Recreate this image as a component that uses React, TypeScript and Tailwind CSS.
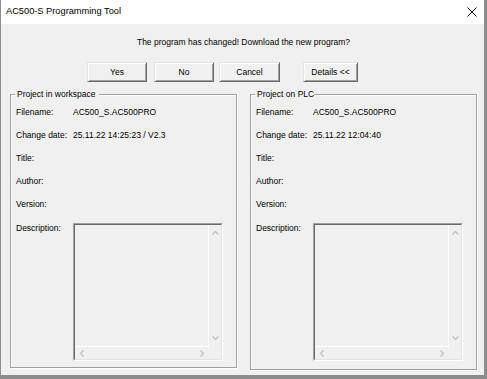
import React from "react";

const font = "font-['Liberation_Sans',Arial,sans-serif]";

const Chevron = ({ dir }: { dir: "up" | "down" | "left" | "right" }) => {
  const d = {
    up: "M0.5 4.5 L3.5 1.5 L6.5 4.5",
    down: "M0.5 1.5 L3.5 4.5 L6.5 1.5",
    left: "M4.5 0.5 L1.5 3.5 L4.5 6.5",
    right: "M1.5 0.5 L4.5 3.5 L1.5 6.5",
  }[dir];
  const vertical = dir === "up" || dir === "down";
  return (
    <svg width={vertical ? 7 : 6} height={vertical ? 6 : 7} className="block">
      <path d={d} fill="none" stroke="#bdbdbd" strokeWidth="1.2" />
    </svg>
  );
};

const Btn = ({ label, w }: { label: string; w: string }) => (
  <button
    className={`${w} h-[20px] text-[8.5px] leading-none text-black bg-[#f0f0f0] border border-t-[#e3e3e3] border-l-[#e3e3e3] border-r-[#696969] border-b-[#696969] shadow-[inset_1px_1px_0_#fff,inset_-1px_-1px_0_#a0a0a0]`}
  >
    {label}
  </button>
);

const TextArea = () => (
  <div className="w-[150px] h-[138px] border border-t-[#a0a0a0] border-l-[#a0a0a0] border-r-white border-b-white">
    <div className="w-full h-full border border-t-[#696969] border-l-[#696969] border-r-[#e3e3e3] border-b-[#e3e3e3] grid grid-cols-[1fr_12px] grid-rows-[1fr_12px] bg-[#f0f0f0]">
      <div className="border-r border-b border-white" />
      <div className="flex flex-col items-center justify-between pt-[5px] pb-[6px]">
        <Chevron dir="up" />
        <Chevron dir="down" />
      </div>
      <div className="flex items-center justify-between pl-[4px] pr-[4px]">
        <Chevron dir="left" />
        <Chevron dir="right" />
      </div>
      <div />
    </div>
  </div>
);

const Group = ({
  title,
  h,
  legendPad,
  file,
  date,
}: {
  title: string;
  h: string;
  legendPad: string;
  file: string;
  date: string;
}) => {
  const rows: [string, string][] = [
    ["Filename:", file],
    ["Change date:", date],
    ["Title:", ""],
    ["Author:", ""],
    ["Version:", ""],
  ];
  return (
    <div
      className={`relative w-[227px] ${h} border border-[#a0a0a0] shadow-[inset_1px_1px_0_#fff,1px_1px_0_#fff] pl-[5px] pt-[6px]`}
    >
      <span
        className={`absolute -top-[7px] left-[4px] pl-[2px] ${legendPad} bg-[#f0f0f0] leading-[13px] text-[8.5px]`}
      >
        {title}
      </span>
      {rows.map(([k, v]) => (
        <div key={k} className="h-[23px] flex items-center">
          <span className="w-[57px] shrink-0">{k}</span>
          <span>{v}</span>
        </div>
      ))}
      <div className="mt-[7px] flex items-start">
        <span className="w-[57px] shrink-0 -mt-[1px] leading-[13px]">Description:</span>
        <TextArea />
      </div>
    </div>
  );
};

export default function App() {
  return (
    <div className={`w-[487px] h-[379px] bg-[#8c8c8c] pl-px ${font} text-black`}>
      <div className="w-[483px] h-[375px] flex flex-col bg-[#f0f0f0]">
        <div className="h-[24px] bg-white flex items-center justify-between pl-[5px] pr-[7px]">
          <span className="text-[9.25px] leading-none">AC500-S Programming Tool</span>
          <svg width="10" height="10" className="block">
            <path d="M0.5 0.5 L9.5 9.5 M9.5 0.5 L0.5 9.5" stroke="#111" strokeWidth="1" />
          </svg>
        </div>
        <div className="flex-1 text-[8.5px] leading-[13px]">
          <div className="pt-[12px] text-center pl-[2px]">
            The program has changed! Download the new program?
          </div>
          <div className="mt-[13px] flex pl-[86px]">
            <Btn label="Yes" w="w-[60px]" />
            <div className="w-[7px]" />
            <Btn label="No" w="w-[60px]" />
            <div className="w-[5px]" />
            <Btn label="Cancel" w="w-[61px]" />
            <div className="w-[23px]" />
            <Btn label="Details <<" w="w-[55px]" />
          </div>
          <div className="mt-[12px] flex items-start pl-[9px] gap-[13px]">
            <Group
              title="Project in workspace"
              h="h-[274px]"
              legendPad="pr-[4px]"
              file="AC500_S.AC500PRO"
              date="25.11.22 14:25:23 / V2.3"
            />
            <Group
              title="Project on PLC"
              h="h-[276px]"
              legendPad="pr-0"
              file="AC500_S.AC500PRO"
              date="25.11.22 12:04:40"
            />
          </div>
        </div>
      </div>
    </div>
  );
}
